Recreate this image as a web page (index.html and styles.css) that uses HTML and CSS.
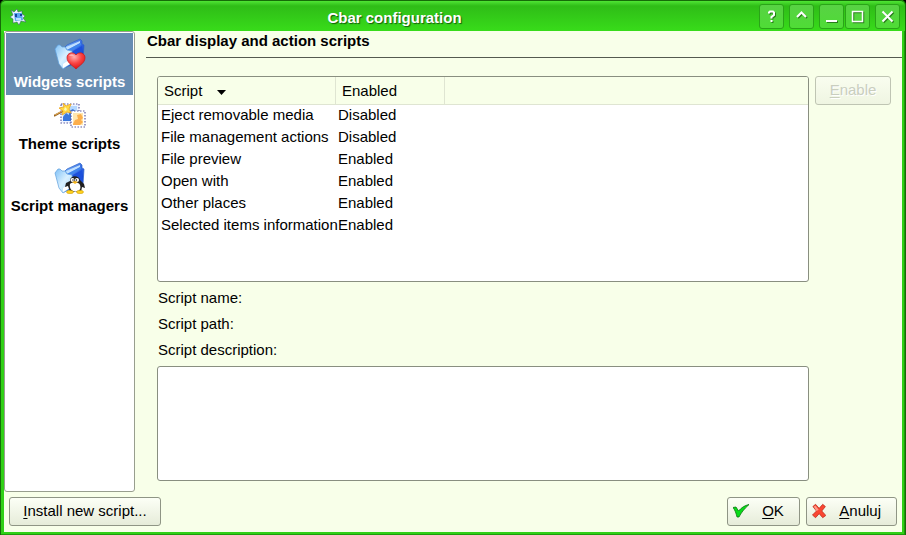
FILE: index.html
```html
<!DOCTYPE html>
<html lang="en">
<head>
    <meta charset="UTF-8">
    <meta name="viewport" content="width=device-width, initial-scale=1.0">
    <title>Cbar configuration</title>
    <link rel="stylesheet" href="styles.css">
</head>
<body>
    <!-- folder shared by two sidebar icons -->
    <svg class="defs" width="0" height="0" aria-hidden="true">
        <defs>
            <linearGradient id="back" x1="0" y1="0" x2="1" y2="1">
                <stop offset="0" stop-color="#8cc8ff"/>
                <stop offset="0.7" stop-color="#1648d8"/>
                <stop offset="1" stop-color="#2a70e8"/>
            </linearGradient>
            <linearGradient id="front" x1="0" y1="0" x2="1" y2="1">
                <stop offset="0" stop-color="#7fc0f6"/>
                <stop offset="0.5" stop-color="#d8f0ff"/>
                <stop offset="1" stop-color="#9ad0fa"/>
            </linearGradient>
            <radialGradient id="red" cx="0.4" cy="0.25" r="0.8">
                <stop offset="0" stop-color="#ffb0b0"/>
                <stop offset="0.5" stop-color="#fa4444"/>
                <stop offset="1" stop-color="#dc0c0c"/>
            </radialGradient>
            <g id="folder">
                <path d="M10 10 L13 7 L26 1 L28 3 L28 6 L30 7 L29 22 L10 30 Z" fill="url(#back)" stroke="#2c62c8" stroke-width="0.7"/>
                <path d="M12 9 L26 3 L26 5 L13 12 Z" fill="#bfe0ff"/>
                <path d="M13 12 L27 5 L27 7 L15 14 Z" fill="#3f86ee"/>
                <path d="M17 14 L28 8 L28 18 L18 22 Z" fill="#1c50dc"/>
                <path d="M1 11 L4 7 L6 7 L8 9 L11 9 L13 12 L18 13 L19 24 L9 31 L5 26 Z" fill="url(#front)" stroke="#5f9fdc" stroke-width="0.7"/>
                <path d="M9 26 L15 22 L16 26 L9 30 Z" fill="#ffffff"/>
            </g>
        </defs>
    </svg>

    <div class="window">
        <header class="titlebar">
            <svg class="app-icon" width="16" height="16" viewBox="0 0 16 16">
                <path d="M1 1 L4 3 L7 0 L8 3 L12 2 L12 5 L15 7 L13 9 L16 13 L11 12 L9 16 L7 13 L3 14 L3 10 L0 8 L3 6 Z" fill="#e8f2fc" stroke="#31566a" stroke-width="0.5"/>
                <path d="M4 4 L12 4 L13 11 L5 12 Z" fill="#5ba6f0"/>
                <path d="M5 5 H7 V8 H5 Z M10 5 H12 V7 H10 Z" fill="#1742a0"/>
                <path d="M6 9 H11 V11 H6 Z" fill="#b8e0ff"/>
            </svg>
            <h1 class="title">Cbar configuration</h1>
            <div class="window-buttons">
                <button class="win-btn" aria-label="Help">
                    <svg width="15" height="15" viewBox="0 0 15 15"><path d="M5 4.5 V3.5 L6 2.5 H9 L10 3.5 V6 L7.5 8 V9.5 M7.5 11 V13"/></svg>
                </button>
                <button class="win-btn" aria-label="Shade">
                    <svg width="15" height="15" viewBox="0 0 15 15"><path d="M3 8 L7.5 3.5 L12 8"/></svg>
                </button>
                <div class="win-pair">
                    <button class="win-btn" aria-label="Minimize">
                        <svg width="15" height="15" viewBox="0 0 15 15"><path d="M2 12 H13"/></svg>
                    </button>
                    <button class="win-btn" aria-label="Maximize">
                        <svg width="15" height="15" viewBox="0 0 15 15"><path d="M2.5 2.5 H12.5 V12.5 H2.5 Z" stroke-width="1.5"/></svg>
                    </button>
                </div>
                <button class="win-btn" aria-label="Close">
                    <svg width="15" height="15" viewBox="0 0 15 15"><path d="M2.5 2.5 L12.5 12.5 M12.5 2.5 L2.5 12.5"/></svg>
                </button>
            </div>
        </header>

        <div class="content">
            <nav class="sidebar">
                <a class="side-item selected" href="#widgets">
                    <svg width="32" height="32" viewBox="0 0 32 32">
                        <use href="#folder"/>
                        <path d="M22 31 C18 27 13 25 13 19.5 C13 15 19 13 22 17 C25 13 31 15 31 19.5 C31 25 26 27 22 31 Z" fill="url(#red)" stroke="#c81818" stroke-width="0.7"/>
                        <path d="M15 18 C16 15.5 19 15.5 20 18 Z" fill="#ffc8c8" opacity="0.7"/>
                    </svg>
                    <span>Widgets scripts</span>
                </a>
                <a class="side-item" href="#theme">
                    <svg width="32" height="32" viewBox="0 0 32 32">
                        <path d="M7 4 H25 V23 H7 Z" fill="#eef3ff" stroke="#5c5ca0" stroke-width="1.2" stroke-dasharray="1.5 1.5"/>
                        <path d="M9 6 H23 V21 H9 Z" fill="#b4d8ff"/>
                        <path d="M9 17 L12 13 L15 15 L15 11 L19 9 L23 13 V21 H9 Z" fill="#3a78dc"/>
                        <path d="M17 11 H31 V27 H17 Z" fill="#ffffff" stroke="#5c5ca0" stroke-width="1.2" stroke-dasharray="1.5 1.5"/>
                        <path d="M19 13 H29 V25 H19 Z" fill="#ffe6b0"/>
                        <path d="M19 24 L21 20 L24 19 L23 15 L27 14 L29 18 L27 20 L29 22 L26 25 H19 Z" fill="#fcae4c"/>
                        <path d="M0 16 L9 11" stroke="#9a6420" stroke-width="2"/>
                        <path d="M1 15 L8 11" stroke="#f3bf68" stroke-width="0.8"/>
                        <path d="M9 3 L12 6 L17 4 L15 9 L17 13 L13 12 L8 15 L9 11 L5 8 L10 7 Z" fill="#ffd944" stroke="#efa51d" stroke-width="0.8"/>
                        <path d="M11 7 L13 9 L12 11 L10 10 Z" fill="#fff9b8"/>
                    </svg>
                    <span>Theme scripts</span>
                </a>
                <a class="side-item" href="#managers">
                    <svg width="32" height="32" viewBox="0 0 32 32">
                        <use href="#folder"/>
                        <path d="M16 19 C16 13 25 13 26 18 L30 22 L31 26 L28 25 L27 30 H16 L14 24 L11 25 L12 21 Z" fill="#202020"/>
                        <path d="M16 22 C18 20 25 20 26 23 C29 32 14 32 16 22 Z" fill="#ffffff"/>
                        <ellipse cx="18.500" cy="18" rx="2" ry="2" fill="#ffffff"/>
                        <ellipse cx="23" cy="18" rx="2" ry="2" fill="#ffffff"/>
                        <circle cx="19" cy="18" r="0.7" fill="#000000"/>
                        <circle cx="22.500" cy="18" r="0.7" fill="#000000"/>
                        <path d="M18 20 L21 19 L24 20 L21 22 Z" fill="#f8b820"/>
                        <ellipse cx="16" cy="30" rx="3.5" ry="1.7" fill="#ffd21c" stroke="#c49000" stroke-width="0.5"/>
                        <ellipse cx="26" cy="30" rx="3.5" ry="1.7" fill="#ffd21c" stroke="#c49000" stroke-width="0.5"/>
                    </svg>
                    <span>Script managers</span>
                </a>
            </nav>

            <main class="page">
                <h2 class="page-title">Cbar display and action scripts</h2>
                <div class="page-body">
                    <div class="column">
                        <div class="list-box">
                            <table class="script-list">
                                <thead>
                                    <tr>
                                        <th class="col-script">Script<svg class="sort" width="9" height="5" viewBox="0 0 9 5"><path d="M0 0 H9 L4.5 5 Z"/></svg></th>
                                        <th class="col-state">Enabled</th>
                                        <td></td>
                                    </tr>
                                </thead>
                                <tbody>
                                    <tr><td>Eject removable media</td><td>Disabled</td><td></td></tr>
                                    <tr><td>File management actions</td><td>Disabled</td><td></td></tr>
                                    <tr><td>File preview</td><td>Enabled</td><td></td></tr>
                                    <tr><td>Open with</td><td>Enabled</td><td></td></tr>
                                    <tr><td>Other places</td><td>Enabled</td><td></td></tr>
                                    <tr><td>Selected items information</td><td>Enabled</td><td></td></tr>
                                </tbody>
                            </table>
                        </div>
                        <div class="details">
                            <div>Script name:</div>
                            <div>Script path:</div>
                            <label for="description">Script description:</label>
                        </div>
                        <textarea class="description" id="description" readonly></textarea>
                    </div>
                    <button class="btn btn-enable" disabled><span><u>E</u>nable</span></button>
                </div>
            </main>
        </div>

        <footer class="buttons">
            <button class="btn btn-install"><span><u>I</u>nstall new script...</span></button>
            <div class="dialog-buttons">
                <button class="btn btn-ok">
                    <svg width="16" height="16" viewBox="0 0 16 16"><path d="M0 4.5 L3 4 L5.5 8 C9 4 12 2.5 16 1.5 C11 6 8 10 6 14 H4 C3 10 2 7 0 4.5 Z" fill="#08dc18" stroke="#08760c" stroke-width="0.8"/></svg>
                    <span><u>O</u>K</span>
                </button>
                <button class="btn btn-cancel">
                    <svg width="16" height="16" viewBox="0 0 16 16"><path d="M1 3 L4 0.5 L8 5 L12 0.5 L15 3 L11 8 L15.5 13 L12 15.5 L8 11 L4 15.5 L0.5 12.5 L5 8 Z" fill="#fa4632" stroke="#b42818" stroke-width="0.8"/><path d="M2 3 L4 2 L7.5 6.5 L5 8 Z" fill="#ff9a88"/></svg>
                    <span><u>A</u>nuluj</span>
                </button>
            </div>
        </footer>
    </div>
</body>
</html>
```
FILE: styles.css
```css
* {
    box-sizing: border-box;
}

body {
    margin: 0;
    background-color: #000;
    font-family: "Liberation Sans", Arial, sans-serif;
    font-size: 15px;
    color: #000;
}

.defs {
    display: block;
}

.window {
    display: flex;
    flex-direction: column;
    min-height: 100vh;
    padding: 0 3px 3px;
    border: 1px solid #166b08;
    border-top: 0;
    border-radius: 5px 5px 0 0;
    background-color: #30d016;
    box-shadow: inset -1px -1px 0 #1d9a0b;
}

/* title bar */
.titlebar {
    display: flex;
    align-items: center;
    height: 31px;
    margin: 0 -3px;
    padding: 1px 5px 0 9px;
    border-top: 1px solid #166b08;
    border-radius: 5px 5px 0 0;
    background: linear-gradient(#4fe435 0, #2fbd17 5px, #38dc1a 100%);
}

.title {
    flex: 1;
    margin: 0;
    padding: 2px 0 0 4px;
    text-align: center;
    font-size: 15px;
    line-height: 18px;
    color: #fff;
    text-shadow: 1px 1px 1px #145c0a;
}

.window-buttons {
    display: flex;
    gap: 5px;
}

.win-pair {
    display: flex;
    gap: 1px;
}

.win-btn {
    display: flex;
    align-items: center;
    justify-content: center;
    width: 25px;
    height: 25px;
    padding: 0;
    border: 1px solid #2aa418;
    border-radius: 3px;
    background: linear-gradient(#58d244, #4fdc36);
}

.win-btn svg {
    fill: none;
    stroke: #fff;
    stroke-width: 2;
    filter: drop-shadow(1px 1px 0 #2a7d1c);
}

/* middle part */
.content {
    display: flex;
    flex: 1;
    background-color: #f8ffe9;
}

.sidebar {
    width: 131px;
    padding: 1px;
    border: 1px solid #989e8e;
    border-radius: 3px;
    background-color: #fff;
}

.side-item {
    display: flex;
    flex-direction: column;
    align-items: center;
    height: 62px;
    padding-top: 5px;
    font-weight: bold;
    line-height: 24px;
    color: #000;
    text-decoration: none;
    white-space: nowrap;
}

.side-item.selected {
    background-color: #678db2;
    color: #fff;
}

.page {
    display: flex;
    flex: 1;
    flex-direction: column;
    padding-left: 11px;
}

.page-title {
    margin: 0;
    padding: 1px 1px 7px;
    border-bottom: 1px solid #555a50;
    font-size: 15px;
    line-height: 18px;
}

.page-body {
    display: flex;
    flex: 1;
    align-items: flex-start;
    gap: 6px;
    padding: 18px 11px 11px;
}

.column {
    display: flex;
    flex: 1;
    flex-direction: column;
    align-self: stretch;
}

.list-box {
    flex: 206 0 206px;
    border: 1px solid #898f80;
    border-radius: 3px;
    background-color: #fff;
    overflow: hidden;
}

.script-list {
    width: 100%;
    table-layout: fixed;
    border-collapse: separate;
    border-spacing: 0;
}

.script-list th,
.script-list thead td {
    height: 28px;
    padding: 0 6px;
    border-bottom: 1px solid #dfe5d2;
    background-color: #f8ffe9;
    font-weight: normal;
    text-align: left;
}

.script-list th {
    border-right: 1px solid #dfe5d2;
}

.col-script {
    width: 178px;
}

.col-state {
    width: 109px;
}

.sort {
    margin: 0 0 1px 15px;
}

.script-list tbody td {
    height: 22px;
    padding: 0 0 2px 3px;
    line-height: 20px;
    white-space: nowrap;
}

.script-list tbody td + td {
    padding-left: 2px;
}

.details {
    display: flex;
    flex-direction: column;
    padding: 3px 1px;
    line-height: 26px;
}

.description {
    flex: 115 0 115px;
    width: 100%;
    border: 1px solid #898f80;
    border-radius: 3px;
    background-color: #fff;
    font: inherit;
    resize: none;
}

/* push buttons */
.btn {
    display: flex;
    align-items: center;
    justify-content: center;
    height: 29px;
    padding: 0 14px 2px;
    border: 1px solid #8f9585;
    border-radius: 3px;
    background: linear-gradient(#fcfff6, #e6ecd9);
    font: inherit;
    color: #000;
    white-space: nowrap;
}

.btn u {
    text-underline-offset: 2px;
}

.btn-enable {
    width: 76px;
    border-color: #bfc5b3;
    background: linear-gradient(#f9fdef, #eff5e2);
    color: #c9cebf;
    text-shadow: 1px 1px 0 #fff;
}

.buttons {
    display: flex;
    justify-content: space-between;
    padding: 5px 5px 6px;
    background-color: #f8ffe9;
}

.dialog-buttons {
    display: flex;
    gap: 6px;
}

.btn-install {
    width: 152px;
}

.btn-ok,
.btn-cancel {
    gap: 13px;
    padding: 0 15px 2px 5px;
}

.btn-ok {
    width: 73px;
}

.btn-cancel {
    width: 91px;
}
```
